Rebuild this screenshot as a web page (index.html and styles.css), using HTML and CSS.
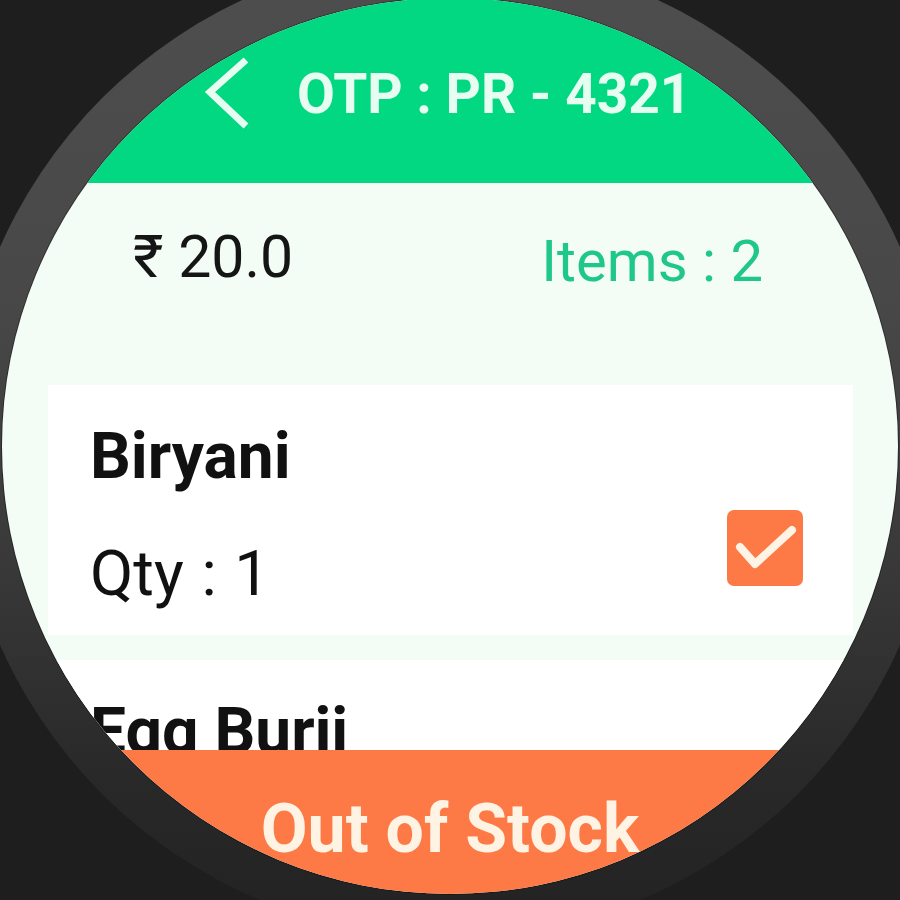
FILE: index.html
```html
<!DOCTYPE html>
<html lang="en">
<head>
<meta charset="utf-8">
<title>OTP : PR - 4321</title>
<link rel="stylesheet" href="styles.css">
</head>
<body>
<div class="bezel">
  <div class="screen">
    <header class="header">
      <svg class="back" width="48" height="76" viewBox="0 0 48 76" aria-hidden="true">
        <polyline points="43,4 7,36 43,70" fill="none" stroke="#e8fdf1" stroke-width="7" stroke-linecap="butt" stroke-linejoin="miter"/>
      </svg>
      <h1 class="title">OTP : PR - 4321</h1>
    </header>
    <section class="summary">
      <span class="price">₹ 20.0</span>
      <span class="count">Items : 2</span>
    </section>
    <section class="list">
      <article class="card">
        <div class="info">
          <div class="name">Biryani</div>
          <div class="qty">Qty : 1</div>
        </div>
        <span class="check">
          <svg width="76" height="76" viewBox="0 0 76 76" aria-hidden="true">
            <polyline points="13,37 28,54 65,20" fill="none" stroke="#fff3e6" stroke-width="8" stroke-linecap="round" stroke-linejoin="round"/>
          </svg>
        </span>
      </article>
      <article class="card">
        <div class="info">
          <div class="name">Egg Burji</div>
          <div class="qty">Qty : 1</div>
        </div>
      </article>
    </section>
    <footer class="footer">Out of Stock</footer>
  </div>
</div>
</body>
</html>
```
FILE: styles.css
```css
html, body {
  margin: 0;
  padding: 0;
  width: 900px;
  height: 900px;
  overflow: hidden;
  background: #1e1e1e;
  font-family: Roboto, "Liberation Sans", Arial, sans-serif;
}

.bezel {
  width: 984px;
  height: 984px;
  margin: -46px 0 0 -42px;
  border-radius: 50%;
  background: linear-gradient(to bottom, #4e4e4e 0%, #484848 35%, #3a3a3a 60%, #282828 85%, #222 100%);
  display: flex;
  align-items: center;
  justify-content: center;
}

.screen {
  width: 896px;
  height: 896px;
  border-radius: 50%;
  overflow: hidden;
  background: #f3fdf6;
  display: flex;
  flex-direction: column;
  box-shadow: 0 0 0 1px rgba(0, 0, 0, 0.35);
}

.header {
  flex: 0 0 185px;
  box-sizing: border-box;
  background: #02d882;
  padding: 58px 0 0 201px;
  display: flex;
  align-items: flex-start;
}

.back {
  display: block;
  flex: 0 0 auto;
}

.title {
  margin: 11px 0 0 46px;
  font-size: 55px;
  line-height: 55px;
  font-weight: 700;
  color: #e8fdf1;
  white-space: nowrap;
}

.summary {
  flex: 0 0 102px;
  box-sizing: border-box;
  display: flex;
  justify-content: space-between;
  align-items: flex-start;
  padding: 44px 135px 0 131px;
}

.price {
  font-size: 59px;
  line-height: 59px;
  color: #151515;
}

.count {
  margin-top: 5px;
  font-size: 58px;
  line-height: 58px;
  color: #1fc78b;
}

.list {
  flex: 1 1 auto;
  min-height: 0;
  overflow: hidden;
  margin: 95px 45px 0 46px;
  display: flex;
  flex-direction: column;
  gap: 25px;
}

.card {
  flex: 0 0 auto;
  height: 250px;
  box-sizing: border-box;
  background: #ffffff;
  padding: 40px 50px 0 42px;
  display: flex;
  justify-content: space-between;
  align-items: flex-start;
}

.name {
  font-size: 64px;
  line-height: 64px;
  font-weight: 700;
  color: #111;
}

.qty {
  margin-top: 53px;
  font-size: 63px;
  line-height: 63px;
  color: #111;
  word-spacing: 2px;
}

.check {
  margin-top: 85px;
  width: 76px;
  height: 76px;
  border-radius: 7px;
  background: #fd7a47;
  display: block;
}

.check svg {
  display: block;
}

.footer {
  flex: 0 0 144px;
  box-sizing: border-box;
  background: #fd7946;
  padding-top: 45px;
  text-align: center;
  font-size: 68px;
  line-height: 68px;
  font-weight: 700;
  color: #fff3e4;
}
```
